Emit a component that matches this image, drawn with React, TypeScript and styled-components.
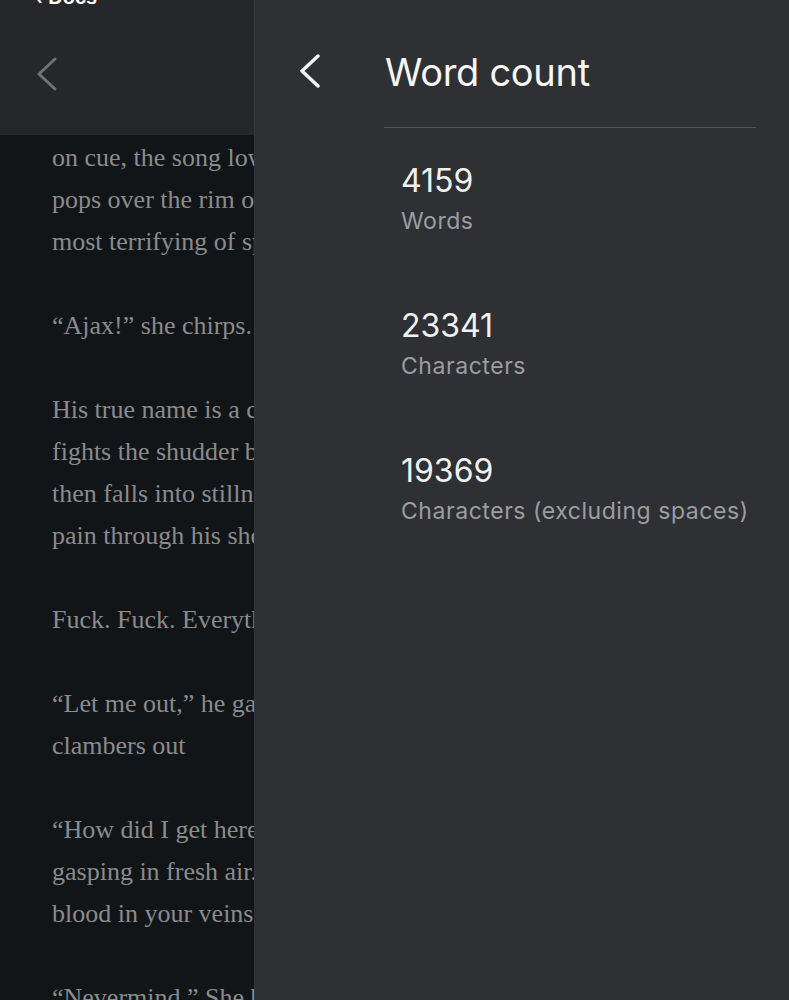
import React from "react";
import styled, { createGlobalStyle } from "styled-components";

const GlobalStyle = createGlobalStyle`
  html, body {
    margin: 0;
    padding: 0;
    background: #121517;
  }
  * {
    box-sizing: border-box;
  }
`;

const docLines: (string | null)[] = [
  "on cue, the song lowers to a hum, and a small head",
  "pops over the rim of the crate, the smallest and",
  "most terrifying of spirits.",
  null,
  "“Ajax!” she chirps. “You’re awake!”",
  null,
  "His true name is a curse in her mouth. He",
  "fights the shudder back, holds it in his chest,",
  "then falls into stillness as the last of the",
  "pain through his shoulders ebbs away.",
  null,
  "Fuck. Fuck. Everything hurts.",
  null,
  "“Let me out,” he gasps, and the lid lifts. He",
  "clambers out",
  null,
  "“How did I get here?” he asks, still",
  "gasping in fresh air. “I can feel the",
  "blood in your veins.”",
  null,
  "“Nevermind,” She bristles and turns away.",
];

const stats = [
  { value: "4159", label: "Words" },
  { value: "23341", label: "Characters" },
  { value: "19369", label: "Characters (excluding spaces)" },
];

const Chevron = ({ color, width = 3.5 }: { color: string; width?: number }) => (
  <svg width="22" height="34" viewBox="0 0 22 34" fill="none">
    <polyline
      points="19,2 3,17 19,32"
      stroke={color}
      strokeWidth={width}
      strokeLinecap="round"
      strokeLinejoin="round"
    />
  </svg>
);

const App = () => {
  return (
    <>
      <GlobalStyle />
      <Screen>
        <DocPane>
          <DocHeader>
            <TopLabel>‹ Docs</TopLabel>
            <DocBack>
              <Chevron color="#707174" width={3} />
            </DocBack>
          </DocHeader>
          <DocBody>
            {docLines.map((line, i) => (
              <DocLine key={i}>{line ?? "\u00a0"}</DocLine>
            ))}
          </DocBody>
        </DocPane>
        <Panel>
          <PanelHeader>
            <PanelBack>
              <Chevron color="#f2f2f2" />
            </PanelBack>
            <Title>Word count</Title>
          </PanelHeader>
          <Divider />
          <StatList>
            {stats.map((s) => (
              <StatRow key={s.label}>
                <StatValue>{s.value}</StatValue>
                <StatLabel>{s.label}</StatLabel>
              </StatRow>
            ))}
          </StatList>
        </Panel>
      </Screen>
    </>
  );
};

const Screen = styled.div`
  display: flex;
  width: 789px;
  height: 1000px;
  overflow: hidden;
`;

const DocPane = styled.div`
  width: 255px;
  flex-shrink: 0;
  display: flex;
  flex-direction: column;
  overflow: hidden;
  background: #121517;
  border-right: 1px solid #34353a;
`;

const DocHeader = styled.div`
  height: 135px;
  flex-shrink: 0;
  display: flex;
  flex-direction: column;
  background: #26272b;
  padding-left: 36px;
`;

const TopLabel = styled.div`
  margin-top: -13px;
  height: 20px;
  font-family: "Liberation Sans", Arial, sans-serif;
  font-size: 20px;
  line-height: 20px;
  font-weight: 700;
  color: #ffffff;
  white-space: nowrap;
`;

const DocBack = styled.div`
  margin-top: 50px;
  display: flex;
`;

const DocBody = styled.div`
  padding: 2px 0 0 52px;
  width: 760px;
  font-family: "Liberation Serif", "Times New Roman", serif;
  font-size: 26px;
  line-height: 42px;
  color: #8a8b8d;
`;

const DocLine = styled.div`
  white-space: nowrap;
`;

const Panel = styled.div`
  flex: 1;
  display: flex;
  flex-direction: column;
  background: #2f3034;
  font-family: Inter, "Liberation Sans", sans-serif;
`;

const PanelHeader = styled.div`
  height: 127px;
  display: flex;
  align-items: flex-start;
  padding: 48px 0 0 44px;
`;

const PanelBack = styled.div`
  display: flex;
  margin-top: 6px;
  width: 86px;
`;

const Title = styled.div`
  font-size: 38px;
  line-height: 48px;
  font-weight: 400;
  color: #f6f6f6;
  letter-spacing: -0.3px;
`;

const Divider = styled.div`
  height: 1px;
  margin: 0 33px 0 129px;
  background: #55565b;
`;

const StatList = styled.div`
  display: flex;
  flex-direction: column;
  padding: 34px 0 0 146px;
`;

const StatRow = styled.div`
  height: 145px;
  display: flex;
  flex-direction: column;
  gap: 6px;
`;

const StatValue = styled.div`
  font-size: 32px;
  line-height: 38px;
  color: #f1f1f1;
`;

const StatLabel = styled.div`
  font-size: 23px;
  line-height: 30px;
  color: #9c9da1;
  letter-spacing: 0.55px;
  white-space: nowrap;
`;

export default App;
